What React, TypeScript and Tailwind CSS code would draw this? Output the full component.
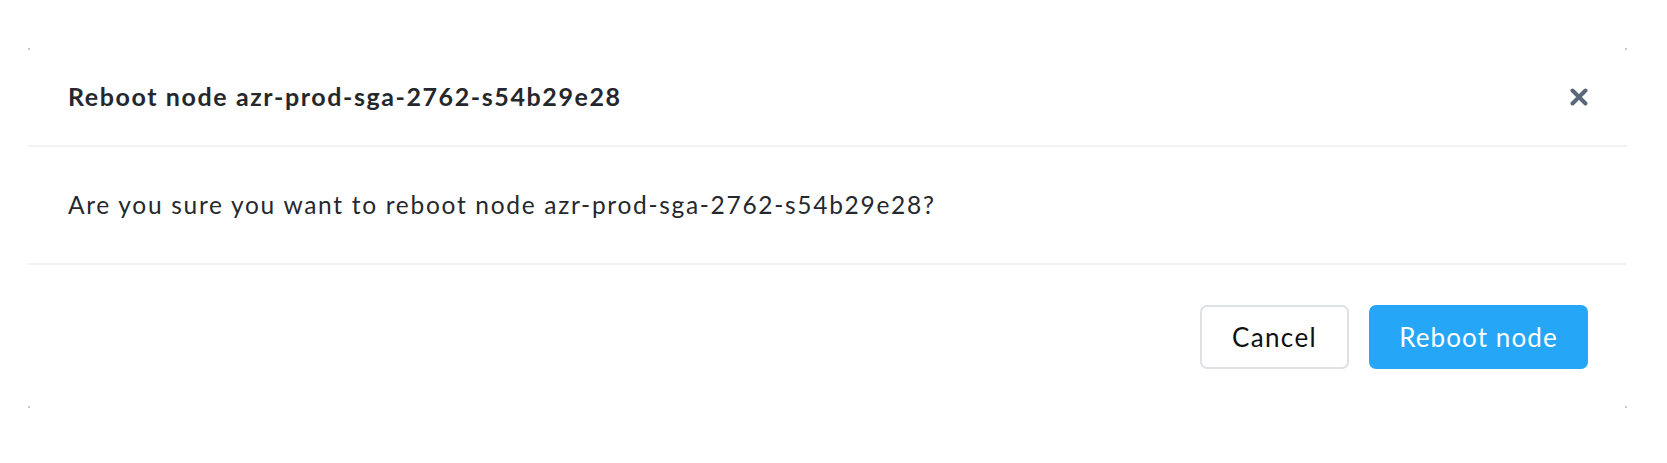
import React from "react";

export default function App() {
  return (
    <div className="min-h-[463px] w-[1667px] bg-white pt-[48px] pl-[28px]" style={{ fontFamily: "Lato, 'Open Sans', sans-serif" }}>
      <div className="relative w-[1599px] bg-white">
        <span className="absolute left-0 top-0 h-[2px] w-[2px] bg-[#c8c8c8]" />
        <span className="absolute right-0 top-0 h-[2px] w-[2px] bg-[#c8c8c8]" />
        <span className="absolute left-0 bottom-0 h-[2px] w-[2px] bg-[#c8c8c8]" />
        <span className="absolute right-0 bottom-0 h-[2px] w-[2px] bg-[#c8c8c8]" />
        <div className="flex h-[99px] items-center justify-between border-b-2 border-[#f1f2f4] pl-[40px] pr-[39px]">
          <h2 className="text-[25px] font-bold text-[#24272c] tracking-[1.6px]">Reboot node azr-prod-sga-2762-s54b29e28</h2>
          <button className="flex h-[18px] w-[18px] items-center justify-center" aria-label="Close">
            <svg width="18" height="18" viewBox="0 0 18 18">
              <path d="M2.5 2.5 L15.5 15.5 M15.5 2.5 L2.5 15.5" stroke="#5b6879" strokeWidth="4" strokeLinecap="round" />
            </svg>
          </button>
        </div>
        <div className="flex h-[118px] items-center border-b-2 border-[#f1f2f4] px-[40px]">
          <p className="text-[24.5px] text-[#25282d] tracking-[1.7px]">Are you sure you want to reboot node azr-prod-sga-2762-s54b29e28?</p>
        </div>
        <div className="flex justify-end gap-[20px] pl-[40px] pr-[39px] pt-[40px] pb-[39px]">
          <button className="flex h-[64px] w-[149px] items-center justify-center rounded-[7px] border-2 border-[#dde1e6] bg-white text-[26px] text-[#111] tracking-[1.4px]">
            Cancel
          </button>
          <button className="flex h-[64px] w-[219px] items-center justify-center rounded-[7px] bg-[#26a6f7] text-[26px] text-white tracking-[1.1px]">
            Reboot node
          </button>
        </div>
      </div>
    </div>
  );
}
